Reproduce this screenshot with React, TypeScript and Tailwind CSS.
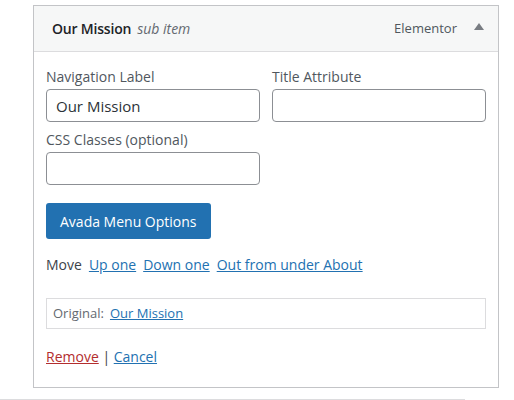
const font = { fontFamily: '"Open Sans", "Noto Sans", sans-serif' };

const Field = ({ label, value }: { label: string; value?: string }) => (
  <label className="flex flex-col">
    <span className="text-[14px] leading-[20px] text-[#50575e]">{label}</span>
    <input
      defaultValue={value}
      className="mt-[2px] h-[33px] w-full rounded-[4px] border border-[#8c8f94] bg-white px-[9px] text-[15px] text-[#2c3338] outline-none"
    />
  </label>
);

export default function App() {
  return (
    <div className="relative h-[400px] w-[514px] overflow-hidden bg-white" style={font}>
      <div className="ml-[33px] mt-[5px] w-[466px] border border-[#c3c4c7]">
        <div className="flex h-[46px] items-center border-b border-[#dcdcde] bg-[#f6f7f7] pl-[18px] pr-[14px]">
          <span className="text-[14px] font-semibold tracking-[-0.2px] text-[#1d2327]">Our Mission</span>
          <span className="ml-[6px] text-[14px] italic text-[#646970]">sub item</span>
          <span className="ml-auto text-[13px] text-[#50575e]">Elementor</span>
          <svg width="10" height="8" viewBox="0 0 10 8" className="mb-[3px] ml-[17px]">
            <path d="M5 0 L10 7 L0 7 Z" fill="#787c82" />
          </svg>
        </div>
        <div className="px-[12px] pb-[20px] pt-[15px]">
          <div className="grid grid-cols-2 gap-x-[12px]">
            <Field label="Navigation Label" value="Our Mission" />
            <Field label="Title Attribute" />
          </div>
          <div className="mt-[8px] w-[214px]">
            <Field label="CSS Classes (optional)" />
          </div>
          <button className="mt-[18px] h-[36px] rounded-[3px] bg-[#2271b1] px-[14px] text-[14px] text-white">
            Avada Menu Options
          </button>
          <div className="mt-[15px] flex gap-[7px] text-[14px] text-[#3c434a]">
            <span>Move</span>
            <a className="text-[#2271b1] underline" href="#">Up one</a>
            <a className="text-[#2271b1] underline" href="#">Down one</a>
            <a className="text-[#2271b1] underline" href="#">Out from under About</a>
          </div>
          <div className="mt-[23px] flex h-[31px] items-center gap-[6px] border border-[#dcdcde] px-[6px] text-[13px] text-[#646970]">
            <span>Original:</span>
            <a className="text-[#2271b1] underline" href="#">Our Mission</a>
          </div>
          <div className="mt-[17px] text-[14px] text-[#3c434a]">
            <a className="text-[#b32d2e] underline" href="#">Remove</a> |{" "}
            <a className="text-[#2271b1] underline" href="#">Cancel</a>
          </div>
        </div>
      </div>
      <div className="mt-[11px] h-[20px] w-[465px] border-r border-t border-[#dcdcde]" />
    </div>
  );
}
